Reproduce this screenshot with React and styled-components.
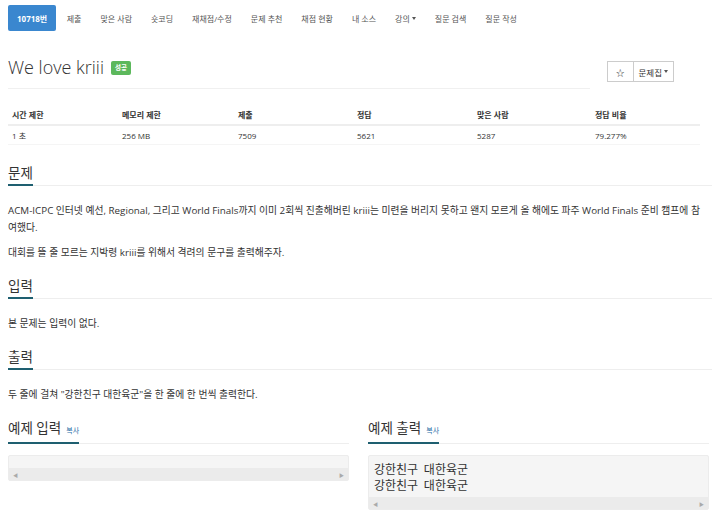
import React from 'react'
import styled, { createGlobalStyle } from 'styled-components'

const GlobalStyle = createGlobalStyle`
  body {
    margin: 0;
    background: #fff;
    font-family: 'Open Sans', 'Noto Sans CJK KR', sans-serif;
    color: #333;
  }
`

const Page = styled.div`
  width: 720px;
  padding: 0 8px;
  box-sizing: border-box;
`

const Nav = styled.ul`
  display: flex;
  align-items: center;
  list-style: none;
  margin: 0;
  padding: 5px 0;
  height: 26px;
`

const NavItem = styled.li`
  height: 26px;
  display: flex;
  align-items: center;
  padding: 0 ${props => (props.active ? '9px' : '9.5px')};
  margin-right: ${props => (props.active ? '1px' : '0')};
  font-size: 8px;
  font-weight: ${props => (props.active ? 700 : 400)};
  color: ${props => (props.active ? '#fff' : '#555')};
  background: ${props => (props.active ? '#3a87cf' : 'transparent')};
  border-radius: 2px;
`

const Caret = styled.span`
  display: inline-block;
  margin-left: 2px;
  border-top: 3px solid #555;
  border-left: 2.5px solid transparent;
  border-right: 2.5px solid transparent;
  vertical-align: middle;
`

const HeaderRow = styled.div`
  display: flex;
  align-items: flex-start;
  margin-top: 20px;
`

const TitleBox = styled.div`
  flex: 0 0 582px;
  border-bottom: 1px solid #f0f0f0;
  padding-bottom: 10px;
`

const Title = styled.h1`
  margin: 0;
  font-size: 18px;
  font-weight: 300;
  line-height: 22px;
  color: #333;
  display: flex;
  align-items: center;
  gap: 7px;
`

const Badge = styled.span`
  display: inline-block;
  background: #5cb85c;
  color: #fff;
  font-size: 6.5px;
  font-weight: 700;
  padding: 2px 4px;
  border-radius: 2px;
  line-height: 10px;
  margin-top: 2px;
`

const BtnGroup = styled.div`
  display: flex;
  margin-left: 17px;
  margin-top: 5px;
`

const Btn = styled.button`
  height: 21px;
  padding: 0 ${props => props.pad || '8px'};
  background: #fff;
  border: 1px solid #ccc;
  margin-left: ${props => (props.joined ? '-1px' : '0')};
  font-family: inherit;
  font-size: 8.5px;
  color: #333;
  display: flex;
  align-items: center;
`

const Table = styled.table`
  width: 692px;
  border-collapse: collapse;
  margin-top: 16px;
  font-size: 8px;
  table-layout: fixed;
`

const Th = styled.th`
  text-align: left;
  font-weight: 700;
  padding: 4px 4px;
  height: 10px;
  border-bottom: 2px solid #eee;
`

const Td = styled.td`
  padding: 4px 4px 3px;
  height: 10px;
  border-bottom: 1px solid #f5f5f5;
`

const Section = styled.section`
  margin-top: ${props => props.top || '15px'};
`

const Heading = styled.h2`
  margin: 0 0 ${props => props.gap || '16px'};
  font-size: 13.5px;
  font-weight: 400;
  line-height: 20px;
  border-bottom: 1px solid #eee;
  color: #333;
`

const HeadLabel = styled.span`
  display: inline-block;
  padding-bottom: 1px;
  margin-bottom: -1px;
  border-bottom: 2px solid #1e5f70;
`

const Copy = styled.span`
  font-size: 7px;
  color: #2a6fa8;
  margin-left: 5px;
`

const Para = styled.p`
  margin: 0 0 8px;
  padding-right: 5px;
  font-size: 9.8px;
  line-height: 17px;
`

const Samples = styled.div`
  display: grid;
  grid-template-columns: 341px 341px;
  column-gap: 19px;
`

const Pre = styled.div`
  background: #f5f5f5;
  border: 1px solid #ececec;
  border-radius: 2px;
`

const PreText = styled.pre`
  margin: 0;
  padding: 5px 5px 4px;
  min-height: 3px;
  font-family: 'Noto Sans CJK KR', 'DejaVu Sans Mono', monospace;
  font-size: 12px;
  line-height: 16px;
  word-spacing: 3px;
  color: #333;
`

const ScrollBar = styled.div`
  height: 12px;
  background: #ebebeb;
  display: flex;
  justify-content: space-between;
  align-items: center;
  padding: 0 4px;
  font-size: 5px;
  color: #aaa;
`

const head = ['시간 제한', '메모리 제한', '제출', '정답', '맞은 사람', '정답 비율']
const vals = ['1 초', '256 MB', '7509', '5621', '5287', '79.277%']
const widths = [110, 116, 119, 120, 118, 109]
const menu = ['제출', '맞은 사람', '숏코딩', '재채점/수정', '문제 추천', '채점 현황', '내 소스']

function Sample ({ label, text }) {
  return (
    <div>
      <Heading gap='11px'><HeadLabel>{label}<Copy>복사</Copy></HeadLabel></Heading>
      <Pre>
        <PreText>{text}</PreText>
        <ScrollBar><span>◀</span><span>▶</span></ScrollBar>
      </Pre>
    </div>
  )
}

export default function App () {
  return (
    <Page>
      <GlobalStyle />
      <Nav>
        <NavItem active>10718번</NavItem>
        {menu.map(m => <NavItem key={m}>{m}</NavItem>)}
        <NavItem>강의<Caret /></NavItem>
        <NavItem>질문 검색</NavItem>
        <NavItem>질문 작성</NavItem>
      </Nav>

      <HeaderRow>
        <TitleBox>
          <Title>We love kriii <Badge>성공</Badge></Title>
        </TitleBox>
        <BtnGroup>
          <Btn pad='8px'>☆</Btn>
          <Btn joined pad='5px'>문제집<Caret /></Btn>
        </BtnGroup>
      </HeaderRow>

      <Table>
        <colgroup>
          {widths.map((w, i) => <col key={i} style={{ width: w }} />)}
        </colgroup>
        <thead>
          <tr>{head.map(h => <Th key={h}>{h}</Th>)}</tr>
        </thead>
        <tbody>
          <tr>{vals.map(v => <Td key={v}>{v}</Td>)}</tr>
        </tbody>
      </Table>

      <Section top='18px'>
        <Heading><HeadLabel>문제</HeadLabel></Heading>
        <Para>ACM-ICPC 인터넷 예선, Regional, 그리고 World Finals까지 이미 2회씩 진출해버린 kriii는 미련을 버리지 못하고 왠지 모르게 올 해에도 파주 World Finals 준비 캠프에 참여했다.</Para>
        <Para>대회를 뜰 줄 모르는 지박령 kriii를 위해서 격려의 문구를 출력해주자.</Para>
      </Section>

      <Section>
        <Heading><HeadLabel>입력</HeadLabel></Heading>
        <Para>본 문제는 입력이 없다.</Para>
      </Section>

      <Section>
        <Heading><HeadLabel>출력</HeadLabel></Heading>
        <Para>두 줄에 걸쳐 "강한친구 대한육군"을 한 줄에 한 번씩 출력한다.</Para>
      </Section>

      <Section>
        <Samples>
          <Sample label='예제 입력' text='' />
          <Sample label='예제 출력' text={'강한친구 대한육군\n강한친구 대한육군'} />
        </Samples>
      </Section>
    </Page>
  )
}
